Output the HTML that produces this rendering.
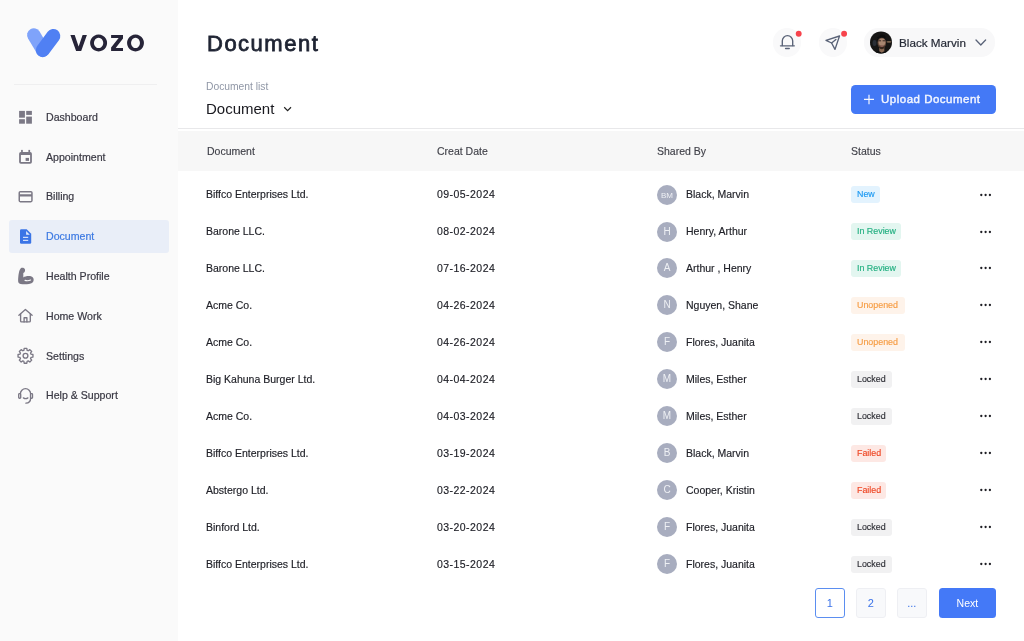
<!DOCTYPE html>
<html><head><meta charset="utf-8"><style>
*{margin:0;padding:0;box-sizing:border-box}
html,body{width:1024px;height:641px;overflow:hidden;background:#fff;font-family:"Liberation Sans", sans-serif;position:relative}
.t{position:absolute;white-space:nowrap;line-height:1.117;will-change:transform}
#side{position:absolute;left:0;top:0;width:178px;height:641px;background:#FAFAFA}
.circ{position:absolute;width:28.2px;height:28.2px;border-radius:50%;background:#F9F9FA}
.av{position:absolute;width:20px;height:20px;border-radius:50%;background:#A8ADBF;color:#EEF0F4;font-size:10px;line-height:20px;text-align:center;will-change:transform}
.bd{position:absolute;height:17px;border-radius:3px;font-size:8.9px;line-height:17.3px;padding-left:6px;white-space:nowrap;will-change:transform}
.pg{will-change:transform;position:absolute;top:588.3px;width:29.7px;height:29.7px;border:1px solid #EEEFF3;background:#F8F9FB;border-radius:3px;color:#3A72E8;font-size:11px;line-height:29px;text-align:center}
</style></head><body>
<div id="side"></div><svg style="position:absolute;left:0;top:0" width="178" height="70">
<line x1="33.8" y1="35" x2="42.8" y2="50.2" stroke="#7FA3FA" stroke-width="13.4" stroke-linecap="round"/>
<line x1="53.3" y1="36" x2="42.8" y2="50.2" stroke="#5080F3" stroke-width="14" stroke-linecap="round"/>
<g fill="#262438">
<path d="M70.4 34.9H74.7L78.6 46.6L82.6 34.9H86.9L81.2 51.1H76.1Z"/>
<path fill-rule="evenodd" d="M98.6 34.5a8.5 8.5 0 1 0 0.001 0Z M98.6 37.8a4.65 5.15 0 1 0 0.001 0Z"/>
<path d="M111.1 34.9H123V38.4L115.7 48.05H123V51.1H111.1V47.6L118.6 37.9H111.1Z"/>
<path fill-rule="evenodd" d="M135.5 34.5a8.45 8.5 0 1 0 0.001 0Z M135.5 37.8a4.45 5.15 0 1 0 0.001 0Z"/>
</g>
</svg><div style="position:absolute;left:14px;top:84px;width:143px;height:1px;background:#EFEFF0"></div><div style="position:absolute;left:9px;top:220px;width:160px;height:33px;background:#E9EEF8;border-radius:3px"></div><div class="t" style="left:45.7px;top:111.71px;font-size:10.6px;color:#393843;font-weight:400;-webkit-text-stroke:0.2px #393843">Dashboard</div>
<div class="t" style="left:45.7px;top:151.71px;font-size:10.6px;color:#393843;font-weight:400;-webkit-text-stroke:0.2px #393843">Appointment</div>
<div class="t" style="left:45.7px;top:191.01px;font-size:10.6px;color:#393843;font-weight:400;-webkit-text-stroke:0.2px #393843">Billing</div>
<div class="t" style="left:45.7px;top:230.91px;font-size:10.6px;color:#3C79E2;font-weight:400;-webkit-text-stroke:0.2px #3C79E2">Document</div>
<div class="t" style="left:45.7px;top:270.71px;font-size:10.6px;color:#393843;font-weight:400;-webkit-text-stroke:0.2px #393843">Health Profile</div>
<div class="t" style="left:45.7px;top:310.61px;font-size:10.6px;color:#393843;font-weight:400;-webkit-text-stroke:0.2px #393843">Home Work</div>
<div class="t" style="left:45.7px;top:350.61px;font-size:10.6px;color:#393843;font-weight:400;-webkit-text-stroke:0.2px #393843">Settings</div>
<div class="t" style="left:45.7px;top:390.01px;font-size:10.6px;color:#393843;font-weight:400;-webkit-text-stroke:0.2px #393843">Help &amp; Support</div>
<svg style="position:absolute;left:0;top:0" width="178" height="420">
<g fill="#7B7885">
<rect x="19.1" y="110.9" width="5.8" height="6.8"/><rect x="19.1" y="119.2" width="5.8" height="4.5"/>
<rect x="26.2" y="110.9" width="5.7" height="4"/><rect x="26.2" y="116.6" width="5.7" height="7.1"/>
</g>
<path d="M20.9 151.9H30.1a1.8 1.8 0 0 1 1.8 1.8V161.9a1.8 1.8 0 0 1-1.8 1.8H20.9a1.8 1.8 0 0 1-1.8-1.8V153.7a1.8 1.8 0 0 1 1.8-1.8Z M20.9 154.9V162.1H30.1V154.9Z" fill="#7B7885" fill-rule="evenodd"/>
<g fill="#7B7885"><rect x="21.1" y="149.9" width="1.7" height="3"/><rect x="28.4" y="149.9" width="1.7" height="3"/><rect x="25.6" y="157.9" width="3.4" height="3"/></g>
<path d="M20.3 191H30.9a1.8 1.8 0 0 1 1.8 1.8V200.6a1.8 1.8 0 0 1-1.8 1.8H20.3a1.8 1.8 0 0 1-1.8-1.8V192.8a1.8 1.8 0 0 1 1.8-1.8Z M20 192.5V194.2H31.2V192.5Z M20 196.6V200.9H31.2V196.6Z" fill="#7B7885" fill-rule="evenodd"/>
<path d="M21.2 229.2H26.7L31.2 233.7V242.5a1.2 1.2 0 0 1-1.2 1.2H21.2a1.2 1.2 0 0 1-1.2-1.2V230.4a1.2 1.2 0 0 1 1.2-1.2Z" fill="#3A74E6"/>
<path d="M26.1 230.9V234.7H29.8Z" fill="#E4ECFB"/>
<rect x="23" y="236.8" width="5.2" height="1.1" fill="#E4ECFB"/><rect x="23" y="239.8" width="5.2" height="1.1" fill="#E4ECFB"/>
<path d="M21 268C22.5 267.5 24.6 267.8 25 269.5C25.3 271 24.6 272.5 23.3 273L23.3 277.4C25 276.1 29 275.5 31.5 276.4C34.2 277.4 34.4 281.3 32 283C30 284.4 24 284.5 20.6 284C18.6 283.7 18 282.2 18.1 280C18.4 275 18.9 270 21 268Z" fill="#7B7885"/>
<path d="M25 280.4C27 280.9 29 280.8 30.6 280" stroke="#FAFAFA" stroke-width="1.1" fill="none" stroke-linecap="round"/>
<g fill="none" stroke="#7B7885" stroke-width="1.35" stroke-linejoin="round" stroke-linecap="round">
<path d="M18.9 315.2L25.4 309.4L32.1 315.2"/>
<path d="M20.6 313.9V320.9a1 1 0 0 0 1 1H29.3a1 1 0 0 0 1-1V313.9"/>
<path d="M24.1 321.9V317.7H26.9V321.9"/>
<path d="M23.87 350.29 L24.19 348.36 L26.81 348.36 L27.13 350.29 L28.24 350.75 L29.83 349.62 L31.68 351.47 L30.55 353.06 L31.01 354.17 L32.94 354.49 L32.94 357.11 L31.01 357.43 L30.55 358.54 L31.68 360.13 L29.83 361.98 L28.24 360.85 L27.13 361.31 L26.81 363.24 L24.19 363.24 L23.87 361.31 L22.76 360.85 L21.17 361.98 L19.32 360.13 L20.45 358.54 L19.99 357.43 L18.06 357.11 L18.06 354.49 L19.99 354.17 L20.45 353.06 L19.32 351.47 L21.17 349.62 L22.76 350.75Z"/>
<circle cx="25.5" cy="355.8" r="2.4"/>
<path d="M20.4 393.5V393.8a5.1 5.1 0 0 1 10.2 0V393.5"/>
<path d="M30.6 398.2C30.6 401 28.6 403 25.9 403.1"/>
<path d="M23.4 397.9C24.8 398.8 26.5 398.8 27.9 397.9"/>
<rect x="18.7" y="393.6" width="2" height="4.6" rx="0.8"/>
<rect x="30.5" y="393.6" width="2" height="4.6" rx="0.8"/>
</g>
</svg><div class="t" style="left:207.3px;top:31.69px;font-size:22px;color:#1F2433;font-weight:400;letter-spacing:1.5px;-webkit-text-stroke:0.8px #1F2433">Document</div>
<div class="t" style="left:206.0px;top:81.28px;font-size:10.3px;color:#9097A6;font-weight:400;">Document list</div>
<div class="t" style="left:206.0px;top:101.02px;font-size:15px;color:#18181E;font-weight:400;">Document</div>
<svg style="position:absolute;left:280px;top:103px" width="14" height="12"><path d="M4.2 4.3L7.6 7.6L11 4.3" fill="none" stroke="#222" stroke-width="1.2"/></svg><div class="circ" style="left:773.2px;top:28.4px"></div><div class="circ" style="left:818.6px;top:28.4px"></div><svg style="position:absolute;left:0;top:0;overflow:visible" width="1024" height="70">
<g fill="none" stroke="#596277" stroke-width="1.35" stroke-linejoin="round" stroke-linecap="round">
<path d="M782.3 45.6V40.9a5.2 5.2 0 0 1 10.4 0V45.6"/>
<path d="M780.5 45.8H794.3"/>
<path d="M785.6 48.6H789.2" stroke-width="1.5"/>
<path d="M839.5 36L826 40.4L831.6 43L835 49.4Z"/>
<path d="M831.6 43L835.9 39.4"/>
</g>
<circle cx="798.7" cy="33.8" r="2.95" fill="#F7434C"/>
<circle cx="844.1" cy="33.8" r="2.95" fill="#F7434C"/>
</svg><div style="position:absolute;left:864px;top:28.4px;width:131px;height:28.3px;border-radius:14px;background:#F8F8F9"></div><svg style="position:absolute;left:869px;top:31px" width="24" height="24">
<defs><clipPath id="avc"><circle cx="12" cy="11.4" r="11"/></clipPath>
<filter id="bl" x="-20%" y="-20%" width="140%" height="140%"><feGaussianBlur stdDeviation="0.6"/></filter></defs>
<g clip-path="url(#avc)">
<rect width="24" height="24" fill="#161514"/>
<g filter="url(#bl)">
<ellipse cx="5.5" cy="12" rx="2" ry="3" fill="#2A2E36"/>
<ellipse cx="20" cy="10.8" rx="2.6" ry="0.9" fill="#7A6550"/>
<rect x="10.3" y="16" width="5" height="6" fill="#8A6A55"/>
<ellipse cx="12.8" cy="12" rx="4.2" ry="5.6" fill="#6E5040"/>
<ellipse cx="13" cy="11.2" rx="3.3" ry="3.6" fill="#A88670"/>
<path d="M9.5 9.8h2.6M13.6 9.8h2.4" stroke="#2A1D18" stroke-width="0.9"/>
<path d="M9 13.3C9.5 16.8 11 18.3 12.8 18.3S16 16.8 16.6 13.3L15.3 15.5C14 16 11.6 16 10.3 15.5Z" fill="#35261F"/>
<ellipse cx="12.8" cy="15.3" rx="1.4" ry="0.7" fill="#8A5A55"/>
<path d="M8.2 9.5C8 5.5 10.5 3.8 12.8 3.8S17.5 5.5 17.2 9.5L16.3 7.2C14.5 6.2 11 6.2 9.2 7.2Z" fill="#0F0D0C"/>
<path d="M3 24C5 21 8.5 20.2 10.8 20.5L12.8 21.8L14.8 20.5C17 20.2 20.5 21 22 24Z" fill="#0C0C0C"/>
</g>
</g></svg><div class="t" style="left:898.7px;top:35.81px;font-size:11.7px;color:#262A36;font-weight:400;-webkit-text-stroke:0.2px #262A36">Black Marvin</div>
<svg style="position:absolute;left:970px;top:35px" width="20" height="16"><path d="M6 5L10.8 10L15.6 5" fill="none" stroke="#5A6378" stroke-width="1.3" stroke-linecap="round" stroke-linejoin="round"/></svg><div style="position:absolute;left:850.6px;top:85.1px;width:145px;height:28.5px;border-radius:4.5px;background:#4479F6"></div><svg style="position:absolute;left:860px;top:90px" width="18" height="18"><path d="M9 4.7V14.2M4 9.45H14" stroke="#F4F7FF" stroke-width="1.2"/></svg><div class="t" style="left:881px;top:92.89px;font-size:11.5px;color:#F4F7FF;font-weight:400;letter-spacing:0.5px;-webkit-text-stroke:0.4px #F4F7FF">Upload Document</div>
<div style="position:absolute;left:178px;top:128px;width:846px;height:1px;background:#E8E8EA"></div><div style="position:absolute;left:178px;top:130.5px;width:846px;height:40px;background:#F7F7F7"></div><div class="t" style="left:206.7px;top:146.00px;font-size:10.5px;color:#404149;font-weight:400;-webkit-text-stroke:0.15px #404149">Document</div>
<div class="t" style="left:436.7px;top:146.00px;font-size:10.5px;color:#404149;font-weight:400;-webkit-text-stroke:0.15px #404149">Creat Date</div>
<div class="t" style="left:657px;top:146.00px;font-size:10.5px;color:#404149;font-weight:400;-webkit-text-stroke:0.15px #404149">Shared By</div>
<div class="t" style="left:850.5px;top:146.00px;font-size:10.5px;color:#404149;font-weight:400;-webkit-text-stroke:0.15px #404149">Status</div>
<div class="t" style="left:206.3px;top:189.40px;font-size:10.5px;color:#202128;font-weight:400;-webkit-text-stroke:0.15px #202128">Biffco Enterprises Ltd.</div>
<div class="t" style="left:436.7px;top:189.40px;font-size:10.5px;color:#202128;font-weight:400;letter-spacing:0.45px;-webkit-text-stroke:0.15px #202128">09-05-2024</div>
<div class="av" style="left:657px;top:184.60px"><span style="font-size:8px">BM</span></div>
<div class="t" style="left:685.7px;top:189.40px;font-size:10.5px;color:#202128;font-weight:400;-webkit-text-stroke:0.15px #202128">Black, Marvin</div>
<div class="bd" style="left:850.5px;top:186.20px;width:29.3px;background:#E3F3FE;color:#1C99F2;-webkit-text-stroke:0.15px #1C99F2">New</div>
<svg style="position:absolute;left:976px;top:189.60px" width="18" height="10"><g fill="#1E1E24"><circle cx="5.3" cy="5" r="1.15"/><circle cx="9.6" cy="5" r="1.15"/><circle cx="13.9" cy="5" r="1.15"/></g></svg>
<div class="t" style="left:206.3px;top:226.33px;font-size:10.5px;color:#202128;font-weight:400;-webkit-text-stroke:0.15px #202128">Barone LLC.</div>
<div class="t" style="left:436.7px;top:226.33px;font-size:10.5px;color:#202128;font-weight:400;letter-spacing:0.45px;-webkit-text-stroke:0.15px #202128">08-02-2024</div>
<div class="av" style="left:657px;top:221.53px">H</div>
<div class="t" style="left:685.7px;top:226.33px;font-size:10.5px;color:#202128;font-weight:400;-webkit-text-stroke:0.15px #202128">Henry, Arthur</div>
<div class="bd" style="left:850.5px;top:223.13px;width:49.5px;background:#E3F6F0;color:#22AF80;-webkit-text-stroke:0.15px #22AF80">In Review</div>
<svg style="position:absolute;left:976px;top:226.53px" width="18" height="10"><g fill="#1E1E24"><circle cx="5.3" cy="5" r="1.15"/><circle cx="9.6" cy="5" r="1.15"/><circle cx="13.9" cy="5" r="1.15"/></g></svg>
<div class="t" style="left:206.3px;top:263.26px;font-size:10.5px;color:#202128;font-weight:400;-webkit-text-stroke:0.15px #202128">Barone LLC.</div>
<div class="t" style="left:436.7px;top:263.26px;font-size:10.5px;color:#202128;font-weight:400;letter-spacing:0.45px;-webkit-text-stroke:0.15px #202128">07-16-2024</div>
<div class="av" style="left:657px;top:258.46px">A</div>
<div class="t" style="left:685.7px;top:263.26px;font-size:10.5px;color:#202128;font-weight:400;-webkit-text-stroke:0.15px #202128">Arthur , Henry</div>
<div class="bd" style="left:850.5px;top:260.06px;width:49.5px;background:#E3F6F0;color:#22AF80;-webkit-text-stroke:0.15px #22AF80">In Review</div>
<svg style="position:absolute;left:976px;top:263.46px" width="18" height="10"><g fill="#1E1E24"><circle cx="5.3" cy="5" r="1.15"/><circle cx="9.6" cy="5" r="1.15"/><circle cx="13.9" cy="5" r="1.15"/></g></svg>
<div class="t" style="left:206.3px;top:300.19px;font-size:10.5px;color:#202128;font-weight:400;-webkit-text-stroke:0.15px #202128">Acme Co.</div>
<div class="t" style="left:436.7px;top:300.19px;font-size:10.5px;color:#202128;font-weight:400;letter-spacing:0.45px;-webkit-text-stroke:0.15px #202128">04-26-2024</div>
<div class="av" style="left:657px;top:295.39px">N</div>
<div class="t" style="left:685.7px;top:300.19px;font-size:10.5px;color:#202128;font-weight:400;-webkit-text-stroke:0.15px #202128">Nguyen, Shane</div>
<div class="bd" style="left:850.5px;top:296.99px;width:54px;background:#FEF3EA;color:#F69C42;-webkit-text-stroke:0.15px #F69C42">Unopened</div>
<svg style="position:absolute;left:976px;top:300.39px" width="18" height="10"><g fill="#1E1E24"><circle cx="5.3" cy="5" r="1.15"/><circle cx="9.6" cy="5" r="1.15"/><circle cx="13.9" cy="5" r="1.15"/></g></svg>
<div class="t" style="left:206.3px;top:337.12px;font-size:10.5px;color:#202128;font-weight:400;-webkit-text-stroke:0.15px #202128">Acme Co.</div>
<div class="t" style="left:436.7px;top:337.12px;font-size:10.5px;color:#202128;font-weight:400;letter-spacing:0.45px;-webkit-text-stroke:0.15px #202128">04-26-2024</div>
<div class="av" style="left:657px;top:332.32px">F</div>
<div class="t" style="left:685.7px;top:337.12px;font-size:10.5px;color:#202128;font-weight:400;-webkit-text-stroke:0.15px #202128">Flores, Juanita</div>
<div class="bd" style="left:850.5px;top:333.92px;width:54px;background:#FEF3EA;color:#F69C42;-webkit-text-stroke:0.15px #F69C42">Unopened</div>
<svg style="position:absolute;left:976px;top:337.32px" width="18" height="10"><g fill="#1E1E24"><circle cx="5.3" cy="5" r="1.15"/><circle cx="9.6" cy="5" r="1.15"/><circle cx="13.9" cy="5" r="1.15"/></g></svg>
<div class="t" style="left:206.3px;top:374.05px;font-size:10.5px;color:#202128;font-weight:400;-webkit-text-stroke:0.15px #202128">Big Kahuna Burger Ltd.</div>
<div class="t" style="left:436.7px;top:374.05px;font-size:10.5px;color:#202128;font-weight:400;letter-spacing:0.45px;-webkit-text-stroke:0.15px #202128">04-04-2024</div>
<div class="av" style="left:657px;top:369.25px">M</div>
<div class="t" style="left:685.7px;top:374.05px;font-size:10.5px;color:#202128;font-weight:400;-webkit-text-stroke:0.15px #202128">Miles, Esther</div>
<div class="bd" style="left:850.5px;top:370.85px;width:41px;background:#F1F1F2;color:#2E2F36;-webkit-text-stroke:0.15px #2E2F36">Locked</div>
<svg style="position:absolute;left:976px;top:374.25px" width="18" height="10"><g fill="#1E1E24"><circle cx="5.3" cy="5" r="1.15"/><circle cx="9.6" cy="5" r="1.15"/><circle cx="13.9" cy="5" r="1.15"/></g></svg>
<div class="t" style="left:206.3px;top:410.98px;font-size:10.5px;color:#202128;font-weight:400;-webkit-text-stroke:0.15px #202128">Acme Co.</div>
<div class="t" style="left:436.7px;top:410.98px;font-size:10.5px;color:#202128;font-weight:400;letter-spacing:0.45px;-webkit-text-stroke:0.15px #202128">04-03-2024</div>
<div class="av" style="left:657px;top:406.18px">M</div>
<div class="t" style="left:685.7px;top:410.98px;font-size:10.5px;color:#202128;font-weight:400;-webkit-text-stroke:0.15px #202128">Miles, Esther</div>
<div class="bd" style="left:850.5px;top:407.78px;width:41px;background:#F1F1F2;color:#2E2F36;-webkit-text-stroke:0.15px #2E2F36">Locked</div>
<svg style="position:absolute;left:976px;top:411.18px" width="18" height="10"><g fill="#1E1E24"><circle cx="5.3" cy="5" r="1.15"/><circle cx="9.6" cy="5" r="1.15"/><circle cx="13.9" cy="5" r="1.15"/></g></svg>
<div class="t" style="left:206.3px;top:447.91px;font-size:10.5px;color:#202128;font-weight:400;-webkit-text-stroke:0.15px #202128">Biffco Enterprises Ltd.</div>
<div class="t" style="left:436.7px;top:447.91px;font-size:10.5px;color:#202128;font-weight:400;letter-spacing:0.45px;-webkit-text-stroke:0.15px #202128">03-19-2024</div>
<div class="av" style="left:657px;top:443.11px">B</div>
<div class="t" style="left:685.7px;top:447.91px;font-size:10.5px;color:#202128;font-weight:400;-webkit-text-stroke:0.15px #202128">Black, Marvin</div>
<div class="bd" style="left:850.5px;top:444.71px;width:35px;background:#FDE8E4;color:#EE4624;-webkit-text-stroke:0.15px #EE4624">Failed</div>
<svg style="position:absolute;left:976px;top:448.11px" width="18" height="10"><g fill="#1E1E24"><circle cx="5.3" cy="5" r="1.15"/><circle cx="9.6" cy="5" r="1.15"/><circle cx="13.9" cy="5" r="1.15"/></g></svg>
<div class="t" style="left:206.3px;top:484.84px;font-size:10.5px;color:#202128;font-weight:400;-webkit-text-stroke:0.15px #202128">Abstergo Ltd.</div>
<div class="t" style="left:436.7px;top:484.84px;font-size:10.5px;color:#202128;font-weight:400;letter-spacing:0.45px;-webkit-text-stroke:0.15px #202128">03-22-2024</div>
<div class="av" style="left:657px;top:480.04px">C</div>
<div class="t" style="left:685.7px;top:484.84px;font-size:10.5px;color:#202128;font-weight:400;-webkit-text-stroke:0.15px #202128">Cooper, Kristin</div>
<div class="bd" style="left:850.5px;top:481.64px;width:35px;background:#FDE8E4;color:#EE4624;-webkit-text-stroke:0.15px #EE4624">Failed</div>
<svg style="position:absolute;left:976px;top:485.04px" width="18" height="10"><g fill="#1E1E24"><circle cx="5.3" cy="5" r="1.15"/><circle cx="9.6" cy="5" r="1.15"/><circle cx="13.9" cy="5" r="1.15"/></g></svg>
<div class="t" style="left:206.3px;top:521.77px;font-size:10.5px;color:#202128;font-weight:400;-webkit-text-stroke:0.15px #202128">Binford Ltd.</div>
<div class="t" style="left:436.7px;top:521.77px;font-size:10.5px;color:#202128;font-weight:400;letter-spacing:0.45px;-webkit-text-stroke:0.15px #202128">03-20-2024</div>
<div class="av" style="left:657px;top:516.97px">F</div>
<div class="t" style="left:685.7px;top:521.77px;font-size:10.5px;color:#202128;font-weight:400;-webkit-text-stroke:0.15px #202128">Flores, Juanita</div>
<div class="bd" style="left:850.5px;top:518.57px;width:41px;background:#F1F1F2;color:#2E2F36;-webkit-text-stroke:0.15px #2E2F36">Locked</div>
<svg style="position:absolute;left:976px;top:521.97px" width="18" height="10"><g fill="#1E1E24"><circle cx="5.3" cy="5" r="1.15"/><circle cx="9.6" cy="5" r="1.15"/><circle cx="13.9" cy="5" r="1.15"/></g></svg>
<div class="t" style="left:206.3px;top:558.70px;font-size:10.5px;color:#202128;font-weight:400;-webkit-text-stroke:0.15px #202128">Biffco Enterprises Ltd.</div>
<div class="t" style="left:436.7px;top:558.70px;font-size:10.5px;color:#202128;font-weight:400;letter-spacing:0.45px;-webkit-text-stroke:0.15px #202128">03-15-2024</div>
<div class="av" style="left:657px;top:553.90px">F</div>
<div class="t" style="left:685.7px;top:558.70px;font-size:10.5px;color:#202128;font-weight:400;-webkit-text-stroke:0.15px #202128">Flores, Juanita</div>
<div class="bd" style="left:850.5px;top:555.50px;width:41px;background:#F1F1F2;color:#2E2F36;-webkit-text-stroke:0.15px #2E2F36">Locked</div>
<svg style="position:absolute;left:976px;top:558.90px" width="18" height="10"><g fill="#1E1E24"><circle cx="5.3" cy="5" r="1.15"/><circle cx="9.6" cy="5" r="1.15"/><circle cx="13.9" cy="5" r="1.15"/></g></svg>
<div class="pg" style="left:815.2px;border:1px solid #5B8EF0;background:#fff">1</div><div class="pg" style="left:856.2px">2</div><div class="pg" style="left:897.4px">...</div><div style="position:absolute;left:938.8px;top:588.3px;width:56.8px;height:29.7px;background:#4479F7;border-radius:3.5px;will-change:transform;color:#fff;font-size:10.5px;line-height:31.5px;text-align:center">Next</div>
</body></html>
